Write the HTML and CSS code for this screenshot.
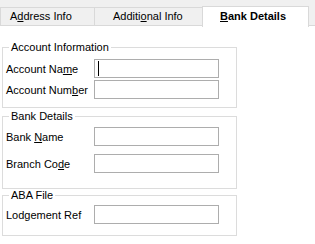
FILE: index.html
```html
<!DOCTYPE html>
<html lang="en">
<head>
    <meta charset="UTF-8">
    <title>Bank Details</title>
    <link rel="stylesheet" href="styles.css">
</head>
<body>
    <div class="tabs">
        <div class="tab tab-address">A<u>d</u>dress Info</div>
        <div class="tab tab-additional">Additi<u>o</u>nal Info</div>
        <div class="tab tab-active"><u>B</u>ank Details</div>
    </div>

    <div class="page">
        <fieldset class="group group-account">
            <legend>Account Information</legend>
            <div class="row">
                <label>Account Na<u>m</u>e</label>
                <input class="field field-focus" type="text">
            </div>
            <div class="row">
                <label>Account Num<u>b</u>er</label>
                <input class="field" type="text">
            </div>
        </fieldset>

        <fieldset class="group group-bank">
            <legend>Bank Details</legend>
            <div class="row">
                <label>Bank <u>N</u>ame</label>
                <input class="field" type="text">
            </div>
            <div class="row">
                <label>Branch Co<u>d</u>e</label>
                <input class="field" type="text">
            </div>
        </fieldset>

        <fieldset class="group group-aba">
            <legend>ABA File</legend>
            <div class="row">
                <label>Lodgement Ref</label>
                <input class="field" type="text">
            </div>
        </fieldset>
    </div>
</body>
</html>
```

FILE: styles.css
```css
* {
    box-sizing: border-box;
}

body {
    margin: 0;
    background: #ffffff;
    color: #000000;
    font-family: 'Liberation Sans', Arial, sans-serif;
    font-size: 11px;
}

/* Tab strip */
.tabs {
    display: flex;
    align-items: flex-end;
    height: 26px;
    background: #f0f0f0;
    border-bottom: 1px solid #d9d9d9;
}

.tab {
    height: 18px;
    line-height: 17px;
    border-top: 1px solid #d9d9d9;
    border-right: 1px solid #d9d9d9;
    background: #f0f0f0;
    white-space: nowrap;
}

.tab-address {
    width: 95px;
    padding-left: 9px;
    border-left: 1px solid #d9d9d9;
}

.tab-additional {
    width: 109px;
    padding-left: 18px;
}

.tab-active {
    position: relative;
    width: 107px;
    height: 21px;
    margin-left: -2px;
    margin-bottom: -2px;
    padding-left: 17px;
    line-height: 18px;
    border-left: 1px solid #d9d9d9;
    background: #ffffff;
    font-weight: bold;
}

/* Group boxes */
.page {
    padding-top: 15px;
}

.group {
    width: 235px;
    margin: 0 0 0 2px;
    padding: 0 0 0 3px;
    border: 1px solid #dcdcdc;
}

.group legend {
    margin-left: 3px;
    padding: 0 2px;
    line-height: 13px;
}

.group-account {
    padding-top: 5px;
    padding-bottom: 8px;
}

.group-account .row + .row {
    margin-top: 2px;
}

.group-bank {
    margin-top: 2px;
    padding-top: 4px;
    padding-bottom: 15px;
}

.group-bank .row + .row {
    margin-top: 8px;
}

.group-aba {
    padding-top: 3px;
    padding-bottom: 11px;
}

.row {
    display: flex;
    align-items: center;
}

.row label {
    width: 88px;
}

.field {
    width: 125px;
    height: 19px;
    margin: 0;
    padding: 0 3px;
    border: 1px solid #adadad;
    border-radius: 0;
    background: #ffffff;
    font: inherit;
    outline: none;
}

.field-focus {
    background: linear-gradient(#000000, #000000) no-repeat 3px 1px / 1px 15px, #ffffff;
}
```
